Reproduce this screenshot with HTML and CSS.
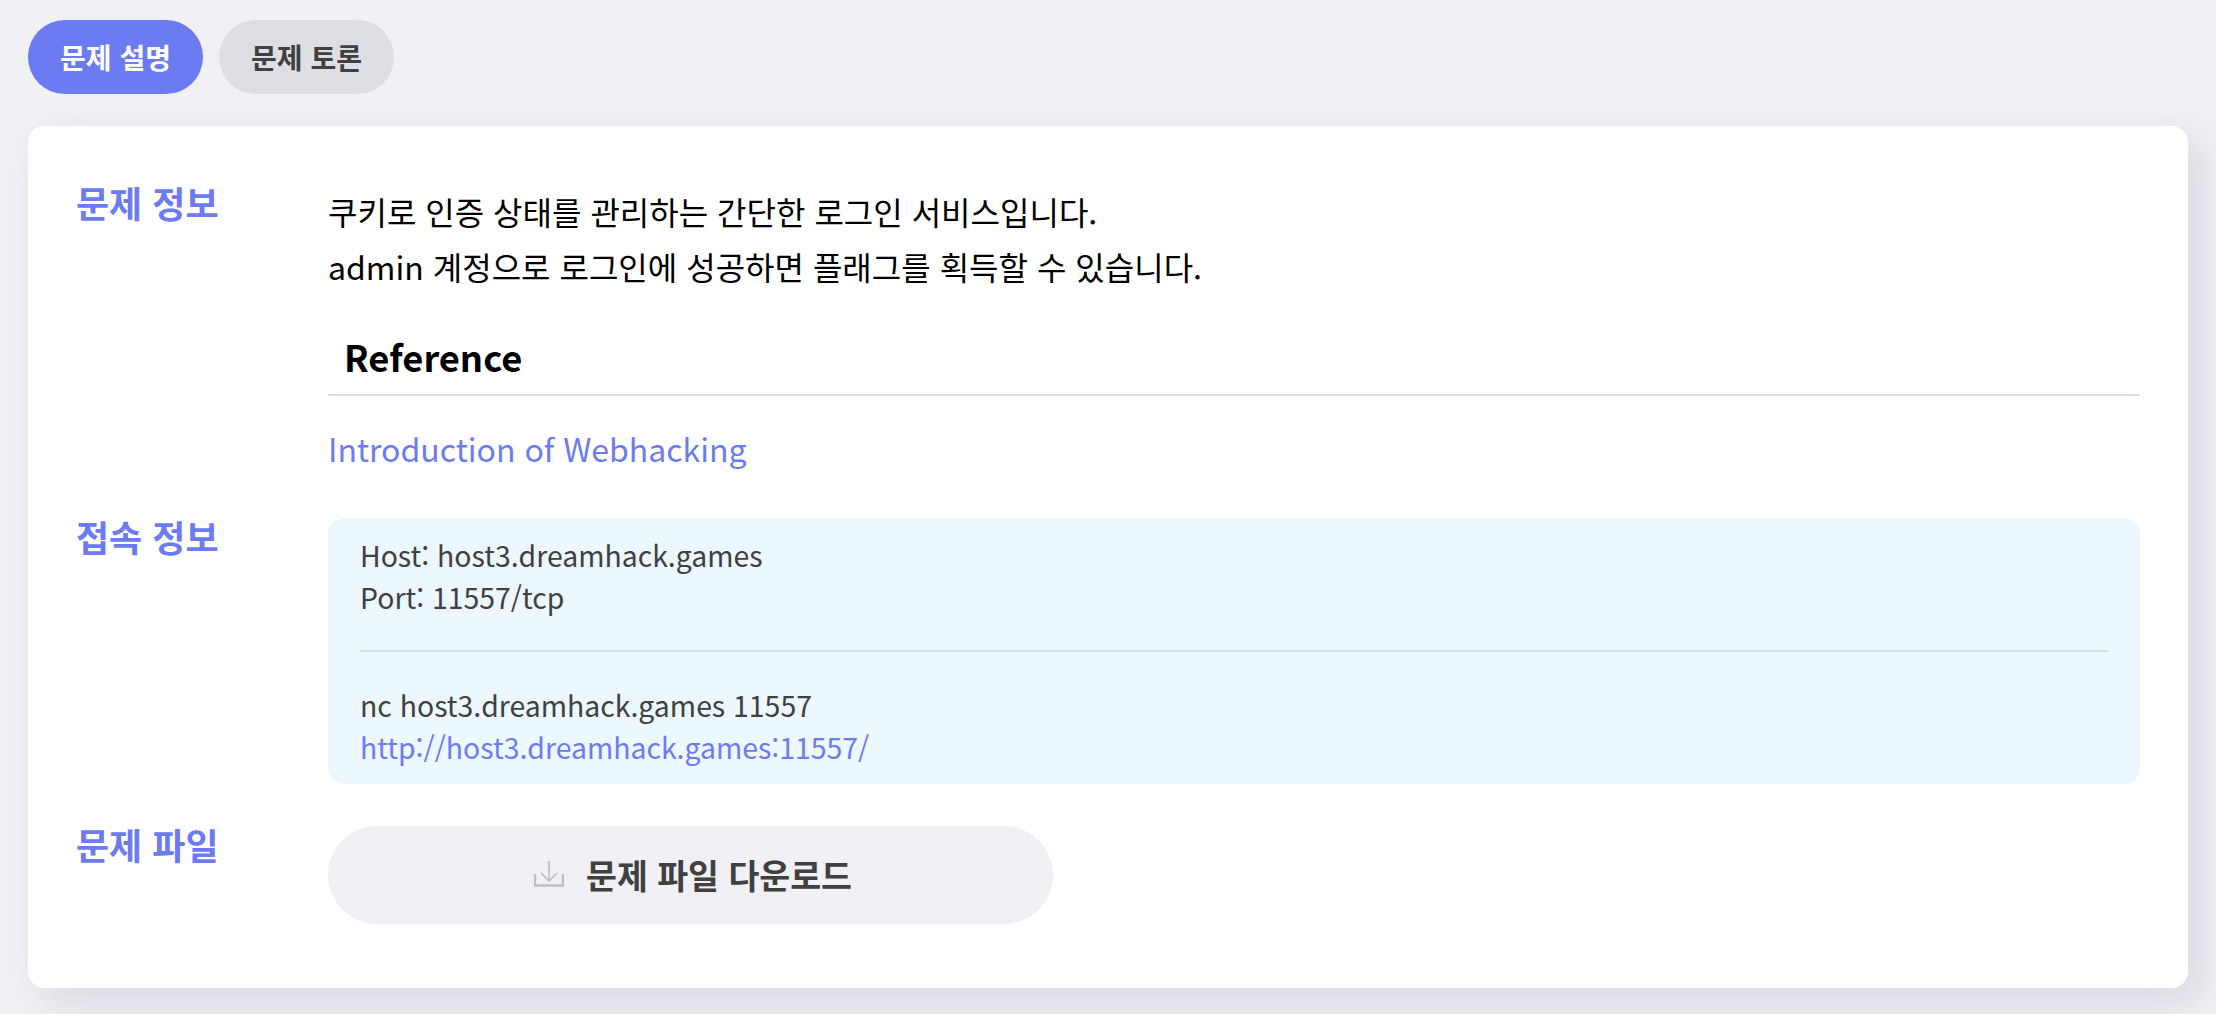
FILE: index.html
```html
<!DOCTYPE html>
<html lang="ko">
<head>
    <meta charset="UTF-8">
    <meta name="viewport" content="width=device-width, initial-scale=1.0">
    <title>문제 설명</title>
    <link rel="stylesheet" href="styles.css">
</head>
<body>
    <nav class="tabs">
        <a class="tab tab-active" href="#">문제 설명</a>
        <a class="tab" href="#">문제 토론</a>
    </nav>
    <main class="card">
        <section class="row">
            <h2 class="row-label">문제 정보</h2>
            <div class="row-body">
                <p class="desc">쿠키로 인증 상태를 관리하는 간단한 로그인 서비스입니다.</p>
                <p class="desc">admin 계정으로 로그인에 성공하면 플래그를 획득할 수 있습니다.</p>
                <h3 class="ref-title">Reference</h3>
                <p class="ref-link"><a href="#">Introduction of Webhacking</a></p>
            </div>
        </section>
        <section class="row">
            <h2 class="row-label">접속 정보</h2>
            <div class="row-body conn-box">
                <p>Host: host3.dreamhack.games</p>
                <p>Port: 11557/tcp</p>
                <hr class="conn-line">
                <p>nc host3.dreamhack.games 11557</p>
                <p><a href="#">http://host3.dreamhack.games:11557/</a></p>
            </div>
        </section>
        <section class="row">
            <h2 class="row-label">문제 파일</h2>
            <div class="row-body">
                <button class="download-button">
                    <svg class="download-icon" viewBox="0 0 30 26" fill="none" stroke="#bfbfc7">
                        <path d="M15 0v20M7 12l8 8 8-8" stroke-width="1.7"/>
                        <path d="M1 13v11.5h28V13" stroke-width="2.4"/>
                    </svg>
                    <span>문제 파일 다운로드</span>
                </button>
            </div>
        </section>
    </main>
</body>
</html>
```

FILE: styles.css
```css
* {
    margin: 0;
    padding: 0;
    box-sizing: border-box;
}

body {
    width: 100%;
    height: 100vh;
    overflow: hidden;
    background: #f0f0f5;
    font-family: "Noto Sans CJK KR", "Noto Sans", sans-serif;
    color: #000;
}

a {
    text-decoration: none;
    color: #6c7bf2;
}

.tabs {
    display: flex;
    gap: 16px;
    padding: 20px 28px 32px;
}

.tab {
    display: flex;
    justify-content: center;
    align-items: center;
    width: 175px;
    height: 74px;
    border-radius: 37px;
    background: #dedfe4;
    color: #404040;
    font-size: 28px;
    font-weight: 700;
}

.tab-active {
    background: #6c7bf2;
    color: #fff;
}

.card {
    display: flex;
    flex-direction: column;
    gap: 42px;
    margin: 0 28px;
    height: 862px;
    padding: 58px 48px 0;
    background: #fff;
    border-radius: 16px;
    box-shadow: 14px 14px 40px rgba(60, 50, 90, 0.12);
}

.row {
    display: grid;
    grid-template-columns: 252px 1fr;
}

.row-label {
    font-size: 36px;
    line-height: 36px;
    font-weight: 700;
    color: #6c7bf2;
}

.desc {
    font-size: 32px;
    line-height: 55px;
}

.ref-title {
    font-size: 36.3px;
    line-height: 54px;
    font-weight: 700;
    padding: 35px 16px 11px;
    border-bottom: 2px solid #dcdce6;
    margin-bottom: 24px;
}

.ref-link {
    font-size: 32px;
    line-height: 56px;
}

.conn-box {
    padding: 16px 32px 0;
    height: 266px;
    background: #ecf7fe;
    border-radius: 16px;
    font-size: 28.4px;
    line-height: 42px;
    color: #404040;
}

.conn-line {
    border: none;
    border-top: 2px solid #d3dfe6;
    margin: 32px 0;
}

.download-button {
    display: flex;
    justify-content: center;
    align-items: center;
    gap: 22px;
    width: 725px;
    height: 98px;
    padding: 0 0 2px 5px;
    border: none;
    border-radius: 49px;
    background: #f0f0f5;
    color: #404040;
    font-family: inherit;
    font-size: 33.6px;
    font-weight: 700;
}

.download-icon {
    width: 30px;
    height: 26px;
}
```
